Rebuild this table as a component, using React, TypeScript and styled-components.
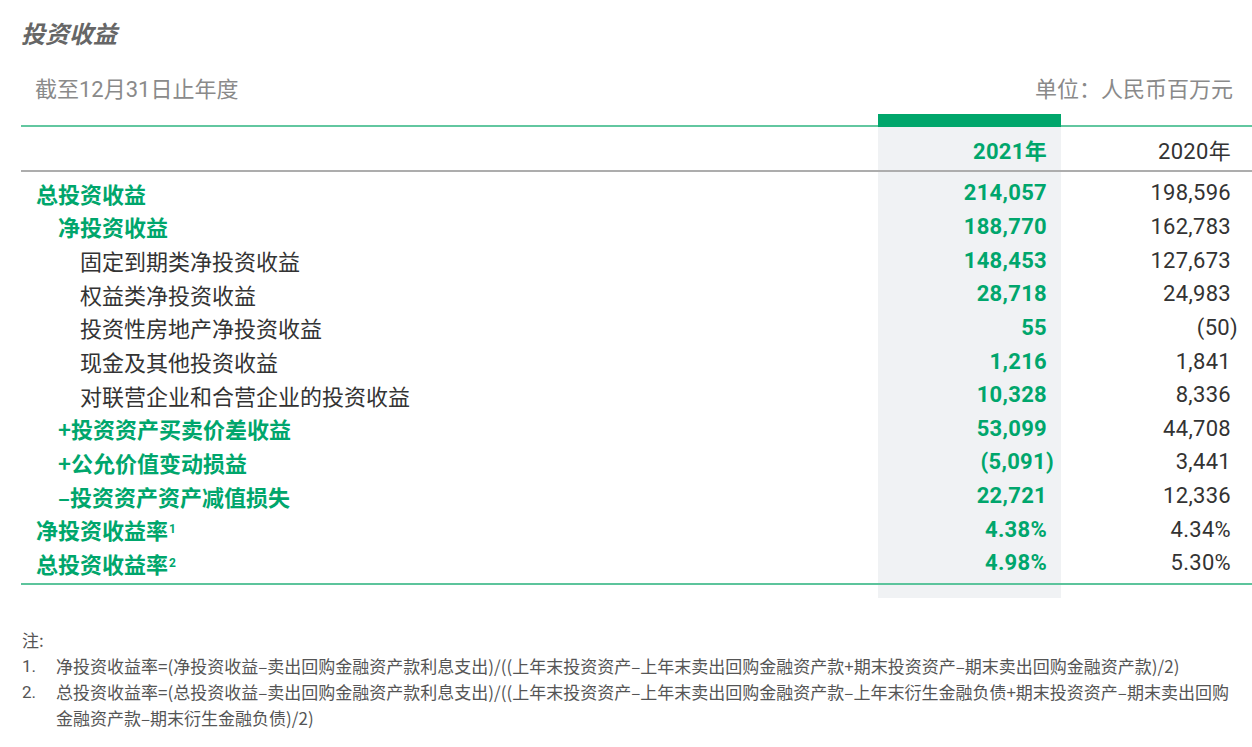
import React from "react";
import styled, { createGlobalStyle } from "styled-components";

const GREEN = "#00a66c";
const TEXT = "#333333";

const Global = createGlobalStyle`
  html, body { margin: 0; padding: 0; background: #ffffff; }
  body {
    font-family: Roboto, "Noto Sans CJK SC", sans-serif;
    overflow: hidden;
  }
`;

const Page = styled.div`
  width: 1252px;
  box-sizing: border-box;
  padding: 16px 0 0 21px;
`;

const Title = styled.h1`
  margin: 0;
  font-family: "Noto Sans CJK SC", sans-serif;
  font-size: 24px;
  line-height: 34px;
  font-weight: 700;
  font-style: italic;
  color: #666666;
`;

const Caption = styled.div`
  display: flex;
  justify-content: space-between;
  margin-top: 25px;
  padding: 0 19px 0 14px;
  font-size: 22px;
  line-height: 30px;
  color: #8a8a8a;
`;

const Table = styled.div`
  display: grid;
  margin-top: 9px;
  grid-template-columns: 1fr 183px 191px;
  grid-template-rows: 13px 43px 2px 4px repeat(12, 33.65px) 3px 2px 13px;
`;

const Shade = styled.div`
  grid-column: 2;
  grid-row: 2 / 20;
  background: #f0f2f4;
`;

const TopRule = styled.div`
  grid-column: 1 / -1;
  grid-row: 1;
  align-self: end;
  height: 2px;
  background: #62c7a0;
`;

const YearBar = styled.div`
  grid-column: 2;
  grid-row: 1;
  background: #00a66b;
  z-index: 1;
`;

const Rule = styled.div<{ $row: number; $color: string }>`
  grid-column: 1 / -1;
  grid-row: ${(p) => p.$row};
  background: ${(p) => p.$color};
  z-index: 1;
`;

const Cell = styled.div<{ $row: number; $col: number }>`
  grid-row: ${(p) => p.$row};
  grid-column: ${(p) => p.$col};
  display: flex;
  align-items: center;
  font-size: 22px;
  white-space: nowrap;
  z-index: 1;
`;

const LabelCell = styled(Cell)<{ $level: number; $strong?: boolean }>`
  padding-left: ${(p) => 15 + p.$level * 22}px;
  font-family: "Noto Sans CJK SC", sans-serif;
  font-weight: ${(p) => (p.$strong ? 700 : 400)};
  color: ${(p) => (p.$strong ? GREEN : TEXT)};
`;

const NumCell = styled(Cell)<{ $current?: boolean }>`
  justify-content: flex-end;
  padding-right: ${(p) => (p.$current ? 14 : 21)}px;
  font-weight: ${(p) => (p.$current ? 700 : 400)};
  color: ${(p) => (p.$current ? GREEN : TEXT)};
  letter-spacing: 0.3px;
`;

const Sup = styled.sup`
  font-size: 12px;
  line-height: 0;
  vertical-align: 10px;
  margin-left: 1px;
  font-family: Roboto, sans-serif;
`;

const Hang = styled.span`
  margin-right: -7px;
`;

const Notes = styled.div`
  margin-top: 29px;
  padding-left: 1px;
  font-family: "Noto Sans CJK SC", sans-serif;
  font-size: 17px;
  line-height: 26px;
  color: #555555;
`;

const NoteItem = styled.div`
  display: grid;
  grid-template-columns: 34px 1fr;
  white-space: nowrap;
`;

const NoteNum = styled.span`
  font-family: Roboto, sans-serif;
`;

type Row = {
  label: string;
  level: number;
  strong?: boolean;
  sup?: string;
  a: string;
  b: string;
};

const rows: Row[] = [
  { label: "总投资收益", level: 0, strong: true, a: "214,057", b: "198,596" },
  { label: "净投资收益", level: 1, strong: true, a: "188,770", b: "162,783" },
  { label: "固定到期类净投资收益", level: 2, a: "148,453", b: "127,673" },
  { label: "权益类净投资收益", level: 2, a: "28,718", b: "24,983" },
  { label: "投资性房地产净投资收益", level: 2, a: "55", b: "(50)" },
  { label: "现金及其他投资收益", level: 2, a: "1,216", b: "1,841" },
  { label: "对联营企业和合营企业的投资收益", level: 2, a: "10,328", b: "8,336" },
  { label: "+投资资产买卖价差收益", level: 1, strong: true, a: "53,099", b: "44,708" },
  { label: "+公允价值变动损益", level: 1, strong: true, a: "(5,091)", b: "3,441" },
  { label: "–投资资产资产减值损失", level: 1, strong: true, a: "22,721", b: "12,336" },
  { label: "净投资收益率", sup: "1", level: 0, strong: true, a: "4.38%", b: "4.34%" },
  { label: "总投资收益率", sup: "2", level: 0, strong: true, a: "4.98%", b: "5.30%" },
];

const renderNum = (v: string) =>
  v.startsWith("(") ? (
    <>
      {v.slice(0, -1)}
      <Hang>)</Hang>
    </>
  ) : (
    v
  );

export default function App() {
  return (
    <>
      <Global />
      <Page>
        <Title>投资收益</Title>
        <Caption>
          <span>截至12月31日止年度</span>
          <span>单位：人民币百万元</span>
        </Caption>
        <Table>
          <Shade />
          <TopRule />
          <YearBar />
          <NumCell $row={2} $col={2} $current>
            2021年
          </NumCell>
          <NumCell $row={2} $col={3}>
            2020年
          </NumCell>
          <Rule $row={3} $color="#adadad" />
          {rows.map((r, i) => (
            <React.Fragment key={r.label}>
              <LabelCell $row={5 + i} $col={1} $level={r.level} $strong={r.strong}>
                {r.label}
                {r.sup && <Sup>{r.sup}</Sup>}
              </LabelCell>
              <NumCell $row={5 + i} $col={2} $current>
                {renderNum(r.a)}
              </NumCell>
              <NumCell $row={5 + i} $col={3}>
                {renderNum(r.b)}
              </NumCell>
            </React.Fragment>
          ))}
          <Rule $row={18} $color="#5cc49c" />
        </Table>
        <Notes>
          <div>注:</div>
          <NoteItem>
            <NoteNum>1.</NoteNum>
            <span>
              净投资收益率=(净投资收益–卖出回购金融资产款利息支出)/((上年末投资资产–上年末卖出回购金融资产款+期末投资资产–期末卖出回购金融资产款)/2)
            </span>
          </NoteItem>
          <NoteItem>
            <NoteNum>2.</NoteNum>
            <span>
              总投资收益率=(总投资收益–卖出回购金融资产款利息支出)/((上年末投资资产–上年末卖出回购金融资产款–上年末衍生金融负债+期末投资资产–期末卖出回购
              <br />
              金融资产款–期末衍生金融负债)/2)
            </span>
          </NoteItem>
        </Notes>
      </Page>
    </>
  );
}
